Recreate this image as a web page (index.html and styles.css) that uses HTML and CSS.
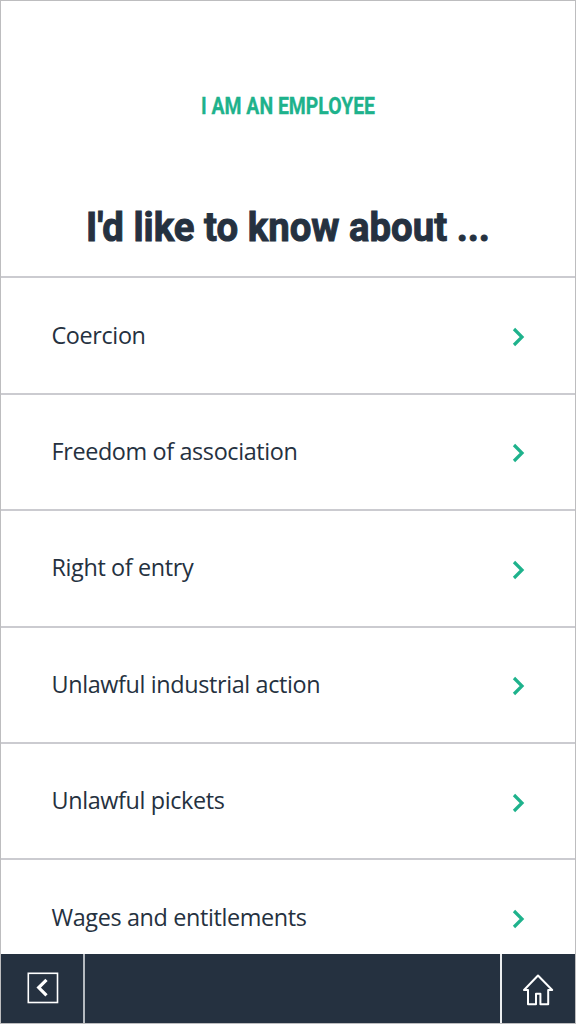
FILE: index.html
```html
<!DOCTYPE html>
<html lang="en">
<head>
<meta charset="utf-8">
<title>I am an employee</title>
<link rel="stylesheet" href="styles.css">
</head>
<body>
<div class="screen">
  <header class="header">
    <svg class="heading" width="576" height="276" viewBox="0 0 576 276" role="heading" aria-level="1">
      <text class="eyebrow" x="201" y="114" textLength="174" lengthAdjust="spacingAndGlyphs">I AM AN EMPLOYEE</text>
      <text class="title" x="86" y="241" textLength="404" lengthAdjust="spacingAndGlyphs">I'd like to know about ...</text>
    </svg>
  </header>
  <main class="list">
    <a class="row"><span class="label">Coercion</span><svg class="chevron" viewBox="0 0 14 20"><path d="M2 2l8 8-8 8"/></svg></a>
    <a class="row"><span class="label">Freedom of association</span><svg class="chevron" viewBox="0 0 14 20"><path d="M2 2l8 8-8 8"/></svg></a>
    <a class="row"><span class="label">Right of entry</span><svg class="chevron" viewBox="0 0 14 20"><path d="M2 2l8 8-8 8"/></svg></a>
    <a class="row"><span class="label">Unlawful industrial action</span><svg class="chevron" viewBox="0 0 14 20"><path d="M2 2l8 8-8 8"/></svg></a>
    <a class="row"><span class="label">Unlawful pickets</span><svg class="chevron" viewBox="0 0 14 20"><path d="M2 2l8 8-8 8"/></svg></a>
    <a class="row"><span class="label">Wages and entitlements</span><svg class="chevron" viewBox="0 0 14 20"><path d="M2 2l8 8-8 8"/></svg></a>
  </main>
  <nav class="toolbar">
    <a class="back"><svg width="32" height="32" viewBox="0 0 32 32"><rect class="thin" x="1.3" y="1.3" width="29.2" height="29.2"/><path class="thick" d="M19.5 7.8l-7.8 7.8 7.8 7.8"/></svg></a>
    <a class="home"><svg width="32" height="32" viewBox="0 0 32 32"><path class="roof" d="M16 1.5L2 16h4v14.2h8V19.8h4.4v10.4h7.8V16h4z"/></svg></a>
  </nav>
</div>
</body>
</html>
```
FILE: styles.css
```css
* { box-sizing: border-box; }
body { margin: 0; background: #fff; }
.screen {
  width: 576px;
  height: 1024px;
  display: flex;
  flex-direction: column;
  overflow: hidden;
  border: 1px solid #bdbdbf;
  color: #253140;
}
.header { height: 275.4px; flex: none; }
.heading { display: block; margin: -1px 0 0 -1px; overflow: visible; }
.eyebrow {
  font: 700 23px Roboto, sans-serif;
  fill: #1eb28c;
  stroke: #1eb28c;
  stroke-width: 0.3;
}
.title {
  font: 700 41.5px Roboto, sans-serif;
  fill: #253140;
  stroke: #253140;
  stroke-width: 1;
}
.list { flex: 1; min-height: 0; overflow: hidden; }
.row {
  height: 116.4px;
  padding: 0 49px 0 50.5px;
  display: flex;
  align-items: center;
  justify-content: space-between;
  border-top: 2px solid #cbcbd0;
}
.label {
  margin-bottom: 2px;
  font: 400 23.4px/32px "Open Sans", sans-serif;
  letter-spacing: -0.37px;
  white-space: nowrap;
}
.chevron {
  width: 14px;
  height: 20px;
  margin-top: 3px;
  fill: none;
  stroke: #1eb28c;
  stroke-width: 3.2;
}
.toolbar {
  height: 69px;
  flex: none;
  display: flex;
  justify-content: space-between;
  background: #253140;
}
.back, .home { display: flex; align-items: center; }
.back { width: 84px; padding-left: 26px; border-right: 2px solid #b5bac0; }
.home { width: 75px; padding-left: 20px; border-left: 2px solid #eceef0; }
.toolbar svg { fill: none; stroke: #fff; }
.back svg { margin-bottom: 2px; }
.home svg { margin-top: 2px; }
.thin { stroke-width: 1.6; }
.thick { stroke-width: 3.2; }
.roof { stroke-width: 2; stroke-linejoin: round; }
```
